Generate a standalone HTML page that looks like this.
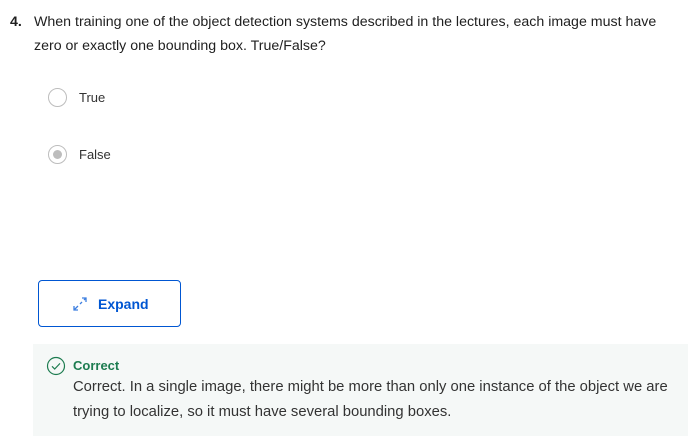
<!DOCTYPE html>
<html><head><style>
body{margin:0;width:697px;height:447px;background:#fff;font-family:"Liberation Sans",sans-serif;color:#1f1f1f;position:relative;overflow:hidden}
.q{position:absolute;left:10px;top:10px;font-size:14.2px;line-height:24px;color:#1f1f1f}
.q b{position:absolute;left:0;top:0}
.q div{position:absolute;left:24px;top:0;width:680px;white-space:nowrap}
.r{position:absolute;left:48px;width:19px;height:19px;border:1.5px solid #bdbdbd;border-radius:50%;box-sizing:border-box}
.r.s::after{content:"";position:absolute;left:3.5px;top:3.5px;width:9px;height:9px;border-radius:50%;background:#bdbdbd}
.l{position:absolute;left:79px;font-size:13px;color:#333}
.btn{position:absolute;left:38px;top:280px;width:143px;height:47px;border:1px solid #0056d2;border-radius:4px;box-sizing:border-box}
.btn span{position:absolute;left:59px;top:15px;font-size:14px;font-weight:bold;color:#0056d2}
.fb{position:absolute;left:33px;top:344px;width:655px;height:92px;background:#f5f8f7}
.fb .t{position:absolute;left:40px;top:14px;font-size:13px;font-weight:bold;color:#1d7c50}
.fb .d{position:absolute;left:40px;top:31px;font-size:14.8px;line-height:25px;color:#333;white-space:nowrap}
</style></head><body>
<div class="q"><b>4.</b><div>When training one of the object detection systems described in the lectures, each image must have<br>zero or exactly one bounding box. True/False?</div></div>
<div class="r" style="top:88px"></div><div class="l" style="top:90px">True</div>
<div class="r s" style="top:145px"></div><div class="l" style="top:147px">False</div>
<div class="btn"><svg style="position:absolute;left:31px;top:13px" width="20" height="20" viewBox="0 0 20 20" fill="none" stroke="#3d7fe0" stroke-width="1.3"><path d="M4 16L8 12M10 10L12 8M14 6L16 4M12 4h4v4M4 12v4h4"/></svg><span>Expand</span></div>
<div class="fb"><svg style="position:absolute;left:13px;top:12px" width="20" height="20" viewBox="0 0 20 20" fill="none" stroke="#1d7c50" stroke-width="1.2"><circle cx="10" cy="10" r="8.5"/><path d="M6 10.3l2.7 2.7 5.3-5.6"/></svg><div class="t">Correct</div><div class="d">Correct. In a single image, there might be more than only one instance of the object we are<br>trying to localize, so it must have several bounding boxes.</div></div>
</body></html>
